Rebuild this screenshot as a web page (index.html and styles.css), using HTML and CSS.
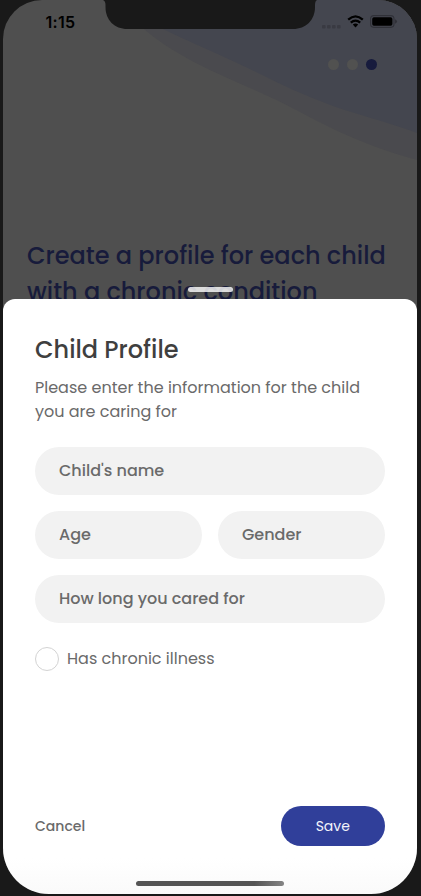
FILE: index.html
```html
<!DOCTYPE html>
<html lang="en">
<head>
<meta charset="utf-8">
<title>Child Profile</title>
<link rel="stylesheet" href="styles.css">
</head>
<body>
<div class="phone">
  <div class="screen">
    <svg class="waves" width="414" height="300" viewBox="3 0 414 300" aria-hidden="true">
      <path fill="#4a4a4e" d="M105 0L144 29C160 43 181 56 210 70C240 84 270 96 300 112C335 131 375 149 417 160V0Z"/>
      <path fill="#44464f" d="M110 0L163 29C187 41 210 50 235 62C265 76 290 90 320 101C355 115 386 121 417 133V0Z"/>
    </svg>
    <div class="notch">
      <svg width="214" height="29" viewBox="0 0 214 29" aria-hidden="true"><path fill="#191919" d="M0 0Q2.500 1 2.500 5V7C2.500 20 11.500 29 24.500 29H190C203 29 212 20 212 7V5Q212 1 214 0Z"/></svg>
    </div>
    <header class="status">
      <span class="time">1:15</span>
      <div class="status-icons">
        <svg class="signal" width="19" height="4" viewBox="0 0 19 4" fill="#393a42"><rect width="3.600" height="3.600" rx="1"/><rect x="5" width="3.600" height="3.600" rx="1"/><rect x="10" width="3.600" height="3.600" rx="1"/><rect x="15" width="3.600" height="3.600" rx="1"/></svg>
        <svg class="wifi" width="17" height="13" viewBox="0 0 17 13"><g fill="none" stroke="#000" stroke-width="2.300"><path d="M1.200 4.700Q8.500-1.900 15.800 4.700"/><path d="M3.800 7.700Q8.500 3.500 13.200 7.700"/></g><path fill="#000" d="M5.800 9.600Q8.500 7.500 11.200 9.600L8.500 12.400Z"/></svg>
        <svg class="battery" width="28" height="13" viewBox="0 0 28 13"><rect x=".6" y=".6" width="23.400" height="11.800" rx="3.300" fill="none" stroke="#303138" stroke-width="1.100"/><rect x="2.200" y="2.200" width="20.200" height="8.600" rx="1.700"/><path fill="#303138" d="M25 4.300Q27 5 27 6.500Q27 8 25 8.700Z"/></svg>
      </div>
    </header>
    <div class="steps"><i></i><i></i><i class="current"></i></div>
    <h1>Create a profile for each child<br>with a chronic condition</h1>
  </div>
  <div class="handle"></div>
  <main class="sheet">
    <h2>Child Profile</h2>
    <p class="intro">Please enter the information for the child<br>you are caring for</p>
    <div class="fields">
      <div class="field wide">Child's name</div>
      <div class="field">Age</div>
      <div class="field">Gender</div>
      <div class="field wide">How long you cared for</div>
    </div>
    <div class="check"><i></i><span>Has chronic illness</span></div>
    <footer><span class="cancel">Cancel</span><button>Save</button></footer>
    <div class="home"></div>
  </main>
</div>
</body>
</html>
```

FILE: styles.css
```css
* { box-sizing: border-box; }
body {
  margin: 0;
  background: #191919;
  font-family: Poppins, Inter, sans-serif;
  overflow: hidden;
}
.phone {
  position: relative;
  width: 414px;
  height: 894px;
  margin: 0 3px 2px;
  border-radius: 39px 39px 46px 46px;
  background: #4f4f4f;
  overflow: hidden;
}
.screen { height: 299px; }
.waves { position: absolute; left: 0; top: 0; }
.notch { position: absolute; left: 100px; top: 0; height: 29px; }
.notch svg, .status svg { display: block; }
.status {
  position: relative;
  display: flex;
  justify-content: space-between;
  height: 44px;
  padding: 15px 19.5px 0 42.5px;
}
.time { font: 600 16px/14px Inter, sans-serif; letter-spacing: .3px; }
.status-icons { display: flex; height: 13px; align-items: flex-end; }
.signal { margin-bottom: -1px; }
.wifi { margin: 0 5.500px 0 6px; }
.steps { position: relative; display: flex; justify-content: flex-end; gap: 8px; padding: 15px 40px 0 0; }
.steps i { width: 11px; height: 11px; border-radius: 50%; background: #515150; }
.steps .current { background: #171b3d; }
h1 {
  margin: 168px 0 0 24px;
  font-size: 24px;
  line-height: 36px;
  font-weight: 500;
  color: #171b3b;
  white-space: nowrap;
}
.handle {
  position: absolute;
  z-index: 1;
  left: 185px;
  top: 287px;
  width: 45px;
  height: 5px;
  border-radius: 3px;
  background: rgba(255,255,255,.8);
}
.sheet {
  position: relative;
  display: flex;
  flex-direction: column;
  height: 595px;
  padding: 33px 32px 8px;
  border-radius: 12px 12px 0 0;
  background: linear-gradient(#fff 94%, #fafafa);
  color: #6a6a6a;
}
h2 { margin: 0; font-size: 24px; line-height: 36px; font-weight: 500; color: #3f3f3f; }
.intro { margin: 8px 0 23px; font-size: 16px; line-height: 24px; white-space: nowrap; }
.fields { display: grid; grid-template-columns: 1fr 1fr; gap: 16px; }
.field {
  height: 48px;
  padding-left: 24px;
  border-radius: 24px;
  background: #f2f2f2;
  font-size: 16px;
  line-height: 48px;
  font-weight: 500;
}
.wide { grid-column: span 2; }
.check { display: flex; align-items: center; gap: 8px; height: 24px; margin-top: 24px; font-size: 16px; line-height: 24px; }
.check span { padding-bottom: 1px; }
.check i { width: 24px; height: 24px; border: 1px solid #d3d3d3; border-radius: 50%; }
footer { display: flex; justify-content: space-between; align-items: center; margin-top: auto; }
.cancel { font-size: 14px; font-weight: 500; }
button {
  width: 104.5px;
  height: 40px;
  padding: 0;
  border: 0;
  border-radius: 20px;
  background: #303f9a;
  color: #f3f4fb;
  font: inherit;
  font-size: 14px;
}
.home {
  flex: none;
  width: 148px;
  height: 5px;
  margin: 35px 0 0 101px;
  border-radius: 3px;
  background: linear-gradient(90deg, #555 80%, #858585);
}
```
